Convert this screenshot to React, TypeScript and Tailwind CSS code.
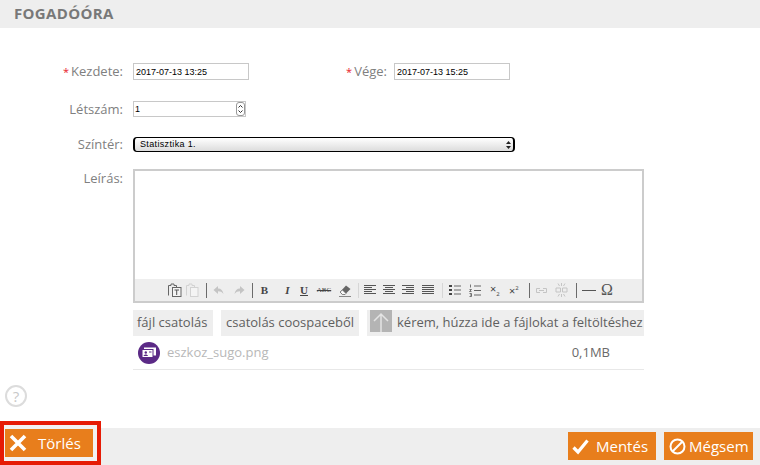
import type { ReactNode } from "react";

const Label = ({ children, required }: { children: ReactNode; required?: boolean }) => (
  <span className="text-[13px] leading-[17px] text-[#808080] whitespace-nowrap">
    {required && <span className="text-[#e8202a] text-[11px] leading-[17px] mr-[2px]">*</span>}
    {children}
  </span>
);

const Lines = ({ rows, w = 12 }: { rows: [number, number][]; w?: number }) => (
  <svg width={w} height="12" viewBox={`0 0 ${w} 12`} className="shrink-0">
    {rows.map(([x, l], i) => (
      <rect key={i} x={x} y={1 + i * 2} width={l} height="1" fill="#555" />
    ))}
  </svg>
);

const Sep = ({ light, className }: { light?: boolean; className: string }) => (
  <span className={`w-px h-[15px] shrink-0 ${light ? "bg-[#d6d6d6]" : "bg-[#6b6b6b]"} ${className}`} />
);

const Arrow = ({ flip }: { flip?: boolean }) => (
  <svg width="11" height="10" viewBox="0 0 11 10" className={flip ? "-scale-x-100" : ""}>
    <path d="M0.5 5 L5 1 V3.5 C8 3.5 10 5.5 10.5 9 C9 7 7.5 6.3 5 6.3 V9 Z" fill="#c4c4c4" />
  </svg>
);

function Toolbar() {
  return (
    <div className="h-[22px] bg-[#eeeeee] flex items-center pl-[32px] text-[#555]">
      <svg width="15" height="14" viewBox="0 0 15 14" className="shrink-0">
        <path d="M1.5 12.5V2.5H4V1h3v1.5h2.5V4" fill="none" stroke="#666" />
        <rect x="5.5" y="4.5" width="8.5" height="9" fill="#f4f4f4" stroke="#666" />
        <path d="M7.5 7h4.5M9.7 7v5" stroke="#555" />
      </svg>
      <svg width="14" height="14" viewBox="0 0 14 14" className="shrink-0 ml-[3px]">
        <path d="M1.5 12.5V2.5H4V1h3v1.5h2.5V4" fill="none" stroke="#d2d2d2" />
        <rect x="5.5" y="4.5" width="7.5" height="9" fill="#f4f4f4" stroke="#d2d2d2" />
      </svg>
      <Sep className="ml-[7px]" />
      <span className="ml-[6px] flex"><Arrow /></span>
      <span className="ml-[10px] flex"><Arrow flip /></span>
      <Sep className="ml-[7px]" />
      <span className="ml-[7px] w-[9px] text-center font-['Liberation_Serif'] font-bold text-[11px] leading-none text-[#444]">B</span>
      <span className="ml-[14px] w-[9px] text-center font-['Liberation_Serif'] font-bold italic text-[11px] leading-none text-[#444]">I</span>
      <span className="ml-[8px] w-[8px] text-center font-['Liberation_Serif'] font-bold underline text-[11px] leading-none text-[#444]">U</span>
      <span className="ml-[8px] w-[16px] text-center font-['Liberation_Serif'] line-through text-[7px] leading-none text-[#444]">ABC</span>
      <svg width="14" height="13" viewBox="0 0 14 13" className="shrink-0 ml-[6px]">
        <path d="M2 8l6-6.5 4.5 3.5-5.5 5.5H4z" fill="#666" />
        <path d="M2 8l2.5 2.5H7L8 9.5 4.5 6z" fill="#fafafa" stroke="#666" strokeWidth=".7" />
        <path d="M1 12.5h12" stroke="#888" />
      </svg>
      <Sep light className="ml-[6px]" />
      <span className="ml-[5px] flex"><Lines rows={[[0, 12], [0, 8], [0, 12], [0, 8], [0, 12]]} /></span>
      <span className="ml-[7px] flex"><Lines rows={[[0, 12], [2, 8], [0, 12], [2, 8], [0, 12]]} /></span>
      <span className="ml-[7px] flex"><Lines rows={[[0, 12], [4, 8], [0, 12], [4, 8], [0, 12]]} /></span>
      <span className="ml-[8px] flex"><Lines rows={[[0, 12], [0, 12], [0, 12], [0, 12], [0, 12]]} /></span>
      <Sep light className="ml-[8px]" />
      <svg width="12" height="12" viewBox="0 0 12 12" className="shrink-0 ml-[6px]">
        <path d="M0 1h3v2H0zM0 5h3v2H0zM0 9h3v2H0z" fill="#444" />
        <path d="M5 2h7M5 6h7M5 10h7" stroke="#666" />
      </svg>
      <svg width="12" height="13" viewBox="0 0 12 13" className="shrink-0 ml-[8px]">
        <path d="M1.5 0.5v3M0.5 5.5h2l-2 2h2M0.5 9.5h2v3h-2M1 11h1.5" stroke="#555" strokeWidth=".8" fill="none" />
        <path d="M5 2h7M5 6.5h7M5 11h7" stroke="#666" />
      </svg>
      <span className="ml-[9px] w-[12px] text-[11px] leading-none font-['Open_Sans'] text-[#444] whitespace-nowrap">
        ×<span className="text-[6px] align-sub">2</span>
      </span>
      <span className="ml-[7px] w-[12px] text-[11px] leading-none font-['Open_Sans'] text-[#444] whitespace-nowrap">
        ×<span className="text-[6px] align-super">2</span>
      </span>
      <Sep className="ml-[8px]" />
      <svg width="13" height="7" viewBox="0 0 13 7" className="shrink-0 ml-[5px]">
        <path d="M5 1.5H1.5v4H5M8 1.5h3.5v4H8M4 3.5h5" fill="none" stroke="#c4c4c4" />
      </svg>
      <svg width="15" height="16" viewBox="0 0 15 16" className="shrink-0 ml-[6px]">
        <path d="M6.5 6H2v4h4.5V6zM8.5 6H13v4H8.5zM7.5 1v3M4 1.5 5.5 4M11 1.5 9.5 4M7.5 12v3M4 14.5 5.5 12M11 14.5 9.5 12" fill="none" stroke="#c4c4c4" />
      </svg>
      <Sep className="ml-[7px]" />
      <span className="ml-[5px] w-[14px] h-px bg-[#555]" />
      <span className="ml-[5px] font-['Liberation_Serif'] text-[16px] leading-none text-[#555]">Ω</span>
    </div>
  );
}

const Chip = ({ children, className = "" }: { children: ReactNode; className?: string }) => (
  <div className={`h-[26px] bg-[#eeeeee] flex items-center text-[13px] text-[#5f5f5f] whitespace-nowrap ${className}`}>{children}</div>
);

const OrangeButton = ({ children, className = "" }: { children: ReactNode; className?: string }) => (
  <button className={`h-[28px] bg-[#e87e1c] text-white text-[15px] flex items-center ${className}`}>{children}</button>
);

export default function App() {
  const inputCls =
    "h-[17px] border border-[#c8c8c8] bg-white px-[2px] text-[9px] text-black font-['Liberation_Sans',sans-serif] outline-none";

  return (
    <div className="w-[760px] h-[465px] bg-white flex flex-col overflow-hidden font-['Open_Sans',sans-serif]">
      <div className="h-[28px] shrink-0 bg-[#eeeeee] pl-[14px] pb-[2px] flex items-center">
        <h1 className="text-[15px] font-bold text-[#787878] tracking-[0.35px]">FOGADÓÓRA</h1>
      </div>

      <div className="flex-1 pt-[35px] pl-[5px] flex flex-col min-h-0">
        <div className="grid grid-cols-[118px_511px] gap-x-[10px] items-start">
          <div className="h-[17px] flex items-center justify-end"><Label required>Kezdete:</Label></div>
          <div className="h-[17px] flex items-center">
            <input readOnly value="2017-07-13 13:25" className={`${inputCls} w-[116px]`} />
            <div className="w-[138px] h-[17px] flex items-center justify-end"><Label required>Vége:</Label></div>
            <input readOnly value="2017-07-13 15:25" className={`${inputCls} w-[116px] ml-[7px]`} />
          </div>

          <div className="mt-[21px] h-[16px] flex items-center justify-end"><Label>Létszám:</Label></div>
          <div className="mt-[21px] relative w-[113px]">
            <input readOnly value="1" className={`${inputCls} w-full !h-[16px] !px-[1px] block`} />
            <span className="absolute right-[1px] top-[1px] w-[9px] h-[14px] border border-[#999] rounded-[3px] bg-white flex items-center justify-center">
              <svg width="5" height="10" viewBox="0 0 5 10"><path d="M0.5 3.5 2.5 1.5 4.5 3.5M0.5 6.5 2.5 8.5 4.5 6.5" fill="none" stroke="#333" /></svg>
            </span>
          </div>

          <div className="mt-[20px] h-[15px] flex items-center justify-end"><Label>Színtér:</Label></div>
          <div className="mt-[20px] relative w-[382px]">
            <select className="block w-full h-[15px] appearance-none border-x-2 border-y border-black rounded-[4px] bg-gradient-to-b from-white to-[#dcdcdc] pl-[5px] text-[9px] leading-[13px] text-black font-['Liberation_Sans',sans-serif] tracking-[0.35px] outline-none">
              <option>Statisztika 1.</option>
            </select>
            <svg width="5" height="8" viewBox="0 0 5 8" className="absolute right-[4px] top-[4px]">
              <path d="M2.5 0 5 3H0zM2.5 8 0 5h5z" fill="#222" />
            </svg>
          </div>

          <div className="mt-[17px] h-[18px] flex items-center justify-end"><Label>Leírás:</Label></div>
          <div className="mt-[17px]">
            <div className="w-[511px] h-[134px] border-2 border-[#cccccc] flex flex-col">
              <div className="flex-1 bg-white" />
              <Toolbar />
            </div>

            <div className="mt-[7px] w-[511px] flex">
              <Chip className="w-[80px] pl-[4px]">fájl csatolás</Chip>
              <Chip className="w-[138px] ml-[8px] pl-[5px]">csatolás coospaceből</Chip>
              <Chip className="ml-[8px] flex-1 overflow-hidden pl-[3px]">
                <span className="w-[22px] h-[22px] mb-[4px] bg-[#b4b4b4] flex items-center justify-center shrink-0 self-start">
                  <svg width="18" height="22" viewBox="0 0 18 22"><path d="M9 22V5M2 11l7-7 7 7" fill="none" stroke="#e4e4e4" strokeWidth="1.5" /></svg>
                </span>
                <span className="ml-[5px]">kérem, húzza ide a fájlokat a feltöltéshez</span>
              </Chip>
            </div>

            <div className="h-[34px] w-[511px] border-b border-[#e8e8e8] flex items-center pl-[5px]">
              <span className="w-[22px] h-[22px] rounded-full bg-[#5b2a86] flex items-center justify-center shrink-0">
                <svg width="14" height="11" viewBox="0 0 14 11">
                  <rect x="2" y="0.5" width="12" height="8" fill="#fff" />
                  <rect x="0" y="2.5" width="11" height="8" fill="#fff" stroke="#5b2a86" />
                  <circle cx="3.8" cy="5.5" r="1.2" fill="#5b2a86" />
                  <path d="M1.5 9c.5-2 4-2 4.5 0z" fill="#5b2a86" />
                  <rect x="7" y="4.5" width="2.5" height="1" fill="#5b2a86" />
                </svg>
              </span>
              <span className="ml-[7px] text-[13px] text-[#b8b8b8]">eszkoz_sugo.png</span>
              <span className="ml-auto mr-[34px] text-[13px] text-[#6a6a6a]">0,1MB</span>
            </div>
          </div>
        </div>

        <span className="mt-[15px] w-[22px] h-[22px] rounded-full border-2 border-[#dcdcdc] flex items-center justify-center text-[15px] leading-none text-[#c8c8c8]">?</span>
      </div>

      <div className="h-[37px] shrink-0 bg-[#eeeeee] flex items-end">
        <div className="w-[101px] h-[44px] border-[4px] border-[#e61b05] bg-[#f2f2f2] flex items-center pl-[1px] shrink-0">
          <OrangeButton className="w-[88px] pl-[3px]">
            <svg width="20" height="20" viewBox="0 0 20 20" className="shrink-0">
              <path d="M3 3l14 14M17 3L3 17" stroke="#fff" strokeWidth="3.6" />
            </svg>
            <span className="ml-[10px] font-normal">Törlés</span>
          </OrangeButton>
        </div>
        <div className="ml-auto flex gap-[8px] pr-[7px] pb-[5px]">
          <OrangeButton className="w-[88px] pl-[4px]">
            <svg width="17" height="17" viewBox="0 0 17 17" className="shrink-0">
              <path d="M1.5 9.5 6 14 15.5 2.5" fill="none" stroke="#fff" strokeWidth="3.2" />
            </svg>
            <span className="ml-[7px]">Mentés</span>
          </OrangeButton>
          <OrangeButton className="w-[89px] pl-[5px]">
            <svg width="17" height="17" viewBox="0 0 17 17" className="shrink-0">
              <circle cx="8.5" cy="8.5" r="7" fill="none" stroke="#fff" strokeWidth="2" />
              <path d="M3.5 13.5l10-10" stroke="#fff" strokeWidth="2" />
            </svg>
            <span className="ml-[3px]">Mégsem</span>
          </OrangeButton>
        </div>
      </div>
    </div>
  );
}
